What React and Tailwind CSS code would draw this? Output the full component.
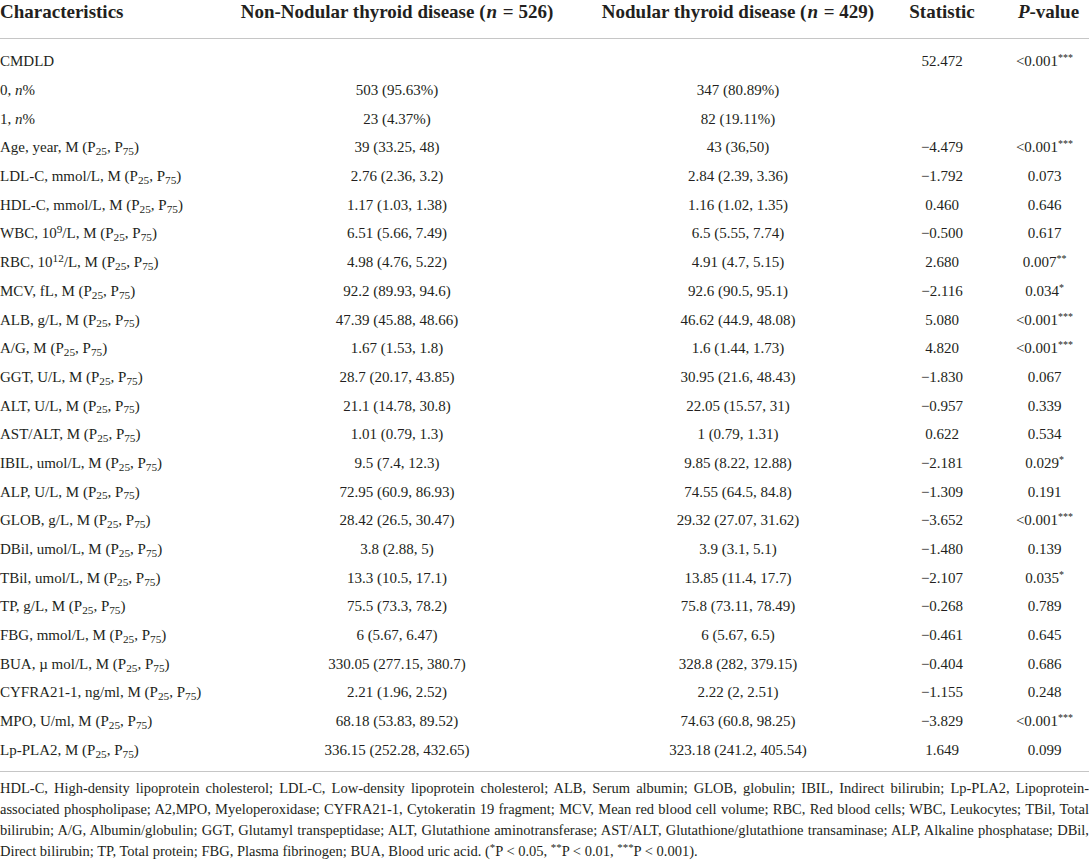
import React from 'react';

const P = () => (
  <>
    M (P<sub>25</sub>, P<sub>75</sub>)
  </>
);

const stars = (n) => <sup className="text-[10px]">{'*'.repeat(n)}</sup>;

const rows = [
  [<>CMDLD</>, '', '', '52.472', <>&lt;0.001{stars(3)}</>],
  [<>0, <i>n</i>%</>, '503 (95.63%)', '347 (80.89%)', '', ''],
  [<>1, <i>n</i>%</>, '23 (4.37%)', '82 (19.11%)', '', ''],
  [<>Age, year, <P /></>, '39 (33.25, 48)', '43 (36,50)', '−4.479', <>&lt;0.001{stars(3)}</>],
  [<>LDL-C, mmol/L, <P /></>, '2.76 (2.36, 3.2)', '2.84 (2.39, 3.36)', '−1.792', '0.073'],
  [<>HDL-C, mmol/L, <P /></>, '1.17 (1.03, 1.38)', '1.16 (1.02, 1.35)', '0.460', '0.646'],
  [<>WBC, 10<sup>9</sup>/L, <P /></>, '6.51 (5.66, 7.49)', '6.5 (5.55, 7.74)', '−0.500', '0.617'],
  [<>RBC, 10<sup>12</sup>/L, <P /></>, '4.98 (4.76, 5.22)', '4.91 (4.7, 5.15)', '2.680', <>0.007{stars(2)}</>],
  [<>MCV, fL, <P /></>, '92.2 (89.93, 94.6)', '92.6 (90.5, 95.1)', '−2.116', <>0.034{stars(1)}</>],
  [<>ALB, g/L, <P /></>, '47.39 (45.88, 48.66)', '46.62 (44.9, 48.08)', '5.080', <>&lt;0.001{stars(3)}</>],
  [<>A/G, <P /></>, '1.67 (1.53, 1.8)', '1.6 (1.44, 1.73)', '4.820', <>&lt;0.001{stars(3)}</>],
  [<>GGT, U/L, <P /></>, '28.7 (20.17, 43.85)', '30.95 (21.6, 48.43)', '−1.830', '0.067'],
  [<>ALT, U/L, <P /></>, '21.1 (14.78, 30.8)', '22.05 (15.57, 31)', '−0.957', '0.339'],
  [<>AST/ALT, <P /></>, '1.01 (0.79, 1.3)', '1 (0.79, 1.31)', '0.622', '0.534'],
  [<>IBIL, umol/L, <P /></>, '9.5 (7.4, 12.3)', '9.85 (8.22, 12.88)', '−2.181', <>0.029{stars(1)}</>],
  [<>ALP, U/L, <P /></>, '72.95 (60.9, 86.93)', '74.55 (64.5, 84.8)', '−1.309', '0.191'],
  [<>GLOB, g/L, <P /></>, '28.42 (26.5, 30.47)', '29.32 (27.07, 31.62)', '−3.652', <>&lt;0.001{stars(3)}</>],
  [<>DBil, umol/L, <P /></>, '3.8 (2.88, 5)', '3.9 (3.1, 5.1)', '−1.480', '0.139'],
  [<>TBil, umol/L, <P /></>, '13.3 (10.5, 17.1)', '13.85 (11.4, 17.7)', '−2.107', <>0.035{stars(1)}</>],
  [<>TP, g/L, <P /></>, '75.5 (73.3, 78.2)', '75.8 (73.11, 78.49)', '−0.268', '0.789'],
  [<>FBG, mmol/L, <P /></>, '6 (5.67, 6.47)', '6 (5.67, 6.5)', '−0.461', '0.645'],
  [<>BUA, µ mol/L, <P /></>, '330.05 (277.15, 380.7)', '328.8 (282, 379.15)', '−0.404', '0.686'],
  [<>CYFRA21-1, ng/ml, <P /></>, '2.21 (1.96, 2.52)', '2.22 (2, 2.51)', '−1.155', '0.248'],
  [<>MPO, U/ml, <P /></>, '68.18 (53.83, 89.52)', '74.63 (60.8, 98.25)', '−3.829', <>&lt;0.001{stars(3)}</>],
  [<>Lp-PLA2, <P /></>, '336.15 (252.28, 432.65)', '323.18 (241.2, 405.54)', '1.649', '0.099'],
];

const grid = 'grid grid-cols-[232px_330px_352px_56px_119px]';
const cell = 'flex justify-center whitespace-nowrap';

export default function App() {
  return (
    <div className="w-[1089px] h-[862px] bg-white text-[#231f20] font-['Liberation_Serif',serif] overflow-hidden">
      {/* header */}
      <div className={`${grid} h-[38px] text-[19px] font-bold leading-[22px] pt-[1px]`}>
        <div className="whitespace-nowrap">Characteristics</div>
        <div className={cell}>
          <span>
            Non-Nodular thyroid disease (<i className="mx-[1px]">n</i>&nbsp;=&nbsp;526)
          </span>
        </div>
        <div className={cell}>
          <span>
            Nodular thyroid disease (<i className="mx-[1px]">n</i>&nbsp;=&nbsp;429)
          </span>
        </div>
        <div className={cell}>
          <span>Statistic</span>
        </div>
        <div className={`${cell} pl-[38px]`}>
          <span>
            <i>P</i>-value
          </span>
        </div>
      </div>
      <div className="h-px bg-[#c6c6c6]" />

      {/* body */}
      <div className="pt-[8px] text-[15px] leading-[20px]">
        {rows.map((r, i) => (
          <div key={i} className={`${grid} h-[28.7px] items-center`}>
            <div className="whitespace-nowrap">{r[0]}</div>
            <div className={cell}>
              <span>{r[1]}</span>
            </div>
            <div className={cell}>
              <span>{r[2]}</span>
            </div>
            <div className={cell}>
              <span>{r[3]}</span>
            </div>
            <div className={`${cell} pl-[30px]`}>
              <span>{r[4]}</span>
            </div>
          </div>
        ))}
      </div>
      <div className="mt-[7px] h-px bg-[#c6c6c6]" />

      {/* footnote */}
      <div className="pt-[6px] text-[14.5px] leading-[21px]">
        <div className="text-justify [text-align-last:justify] whitespace-nowrap">
          HDL-C, High-density lipoprotein cholesterol; LDL-C, Low-density lipoprotein cholesterol; ALB, Serum albumin; GLOB, globulin; IBIL, Indirect bilirubin; Lp-PLA2, Lipoprotein-
        </div>
        <div className="text-justify [text-align-last:justify] whitespace-nowrap">
          associated phospholipase; A2,MPO, Myeloperoxidase; CYFRA21-1, Cytokeratin 19 fragment; MCV, Mean red blood cell volume; RBC, Red blood cells; WBC, Leukocytes; TBil, Total
        </div>
        <div className="text-justify [text-align-last:justify] whitespace-nowrap">
          bilirubin; A/G, Albumin/globulin; GGT, Glutamyl transpeptidase; ALT, Glutathione aminotransferase; AST/ALT, Glutathione/glutathione transaminase; ALP, Alkaline phosphatase; DBil,
        </div>
        <div className="whitespace-nowrap">
          Direct bilirubin; TP, Total protein; FBG, Plasma fibrinogen; BUA, Blood uric acid. (<sup>*</sup>P &lt; 0.05, <sup>**</sup>P &lt; 0.01, <sup>***</sup>P &lt; 0.001).
        </div>
      </div>
    </div>
  );
}
